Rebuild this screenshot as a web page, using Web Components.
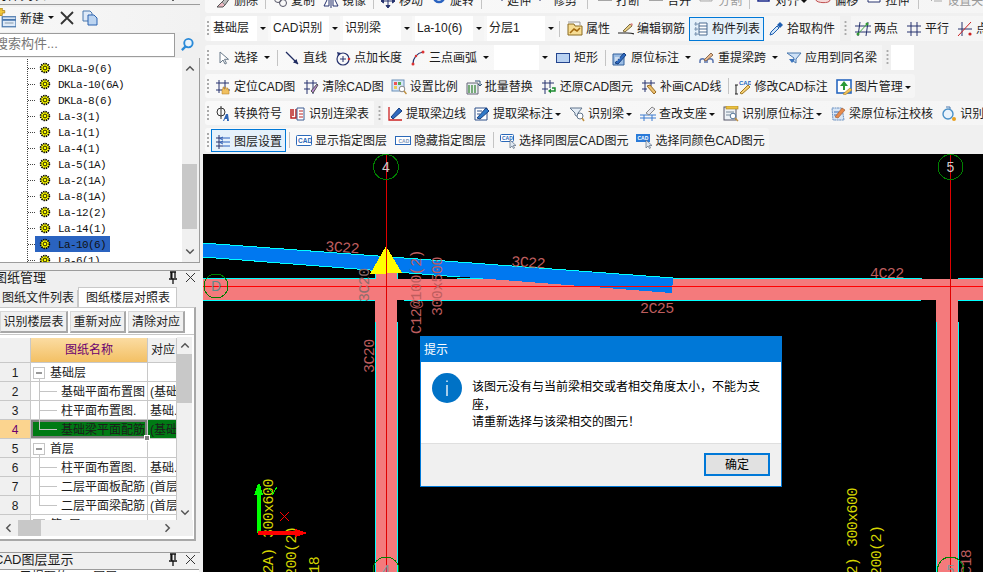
<!DOCTYPE html>
<html lang="zh">
<head>
<meta charset="utf-8">
<title>构件</title>
<style>
  html, body { margin: 0; height: 100%; overflow: hidden; background: #f0f0f0; }
  body { font: 12px "Liberation Sans", "Noto Sans CJK SC", sans-serif; color: #1c1c1c; }
</style>
</head>
<body>
<app-shell>
  <side-panel slot="side"></side-panel>

  <tool-bar slot="main" style="height:24px;margin-top:-11px">
    <tool-btn icon="erase">删除</tool-btn><tool-sep></tool-sep>
    <tool-btn icon="chain">复制</tool-btn>
    <tool-btn icon="mirror">镜像</tool-btn><tool-sep></tool-sep>
    <tool-btn icon="move">移动</tool-btn>
    <tool-btn icon="rotate">旋转</tool-btn><tool-sep></tool-sep>
    <tool-btn icon="extend">延伸</tool-btn>
    <tool-btn icon="trim" style="margin-left:-5px">修剪</tool-btn><tool-sep style="width:12px"></tool-sep>
    <tool-btn icon="break">打断</tool-btn>
    <tool-btn icon="merge">合并</tool-btn>
    <tool-btn icon="split" disabled>分割</tool-btn><tool-sep></tool-sep>
    <tool-btn icon="align" arrow="tight">对齐</tool-btn>
    <tool-btn icon="offset">偏移</tool-btn>
    <tool-btn icon="stretch">拉伸</tool-btn><tool-sep style="width:11px"></tool-sep>
    <tool-btn icon="grip" disabled>设置夹点</tool-btn>
  </tool-bar>

  <tool-bar slot="main" grip style="height:25px;margin-top:3px">
    <tool-combo w="57">基础层</tool-combo>
    <tool-combo w="69">CAD识别</tool-combo>
    <tool-combo w="69">识别梁</tool-combo>
    <tool-combo w="69">La-10(6)</tool-combo>
    <tool-combo w="69">分层1</tool-combo>
    <tool-sep style="margin-left:-3px;width:7px"></tool-sep>
    <tool-btn icon="prop">属性</tool-btn>
    <tool-btn icon="editbar">编辑钢筋</tool-btn>
    <tool-btn icon="list" active>构件列表</tool-btn>
    <tool-btn icon="dropper">拾取构件</tool-btn>
    <tool-gap style="width:11px"></tool-gap>
    <tool-btn icon="twopoint">两点</tool-btn>
    <tool-btn icon="parallel">平行</tool-btn>
    <tool-btn icon="pointang">点</tool-btn>
  </tool-bar>

  <tool-bar slot="main" grip style="height:25px;margin-top:4px">
    <tool-btn icon="cursor" arrow>选择</tool-btn><tool-sep></tool-sep>
    <tool-btn icon="line">直线</tool-btn>
    <tool-btn icon="pointlen">点加长度</tool-btn>
    <tool-btn icon="arc" arrow>三点画弧</tool-btn>
    <tool-combo w="56" blank style="margin:0 1px"></tool-combo>
    <tool-btn icon="rect">矩形</tool-btn><tool-sep></tool-sep>
    <tool-btn icon="inplace" arrow>原位标注</tool-btn>
    <tool-btn icon="respan" arrow>重提梁跨</tool-btn>
    <tool-btn icon="funnel">应用到同名梁</tool-btn>
    <tool-gap></tool-gap>
    <tool-combo w="23" blank bare style="margin:0"></tool-combo>
  </tool-bar>

  <tool-bar slot="main" grip style="height:24px;margin-top:4px;--ty:2px">
    <tool-btn icon="locate">定位CAD图</tool-btn>
    <tool-btn icon="clear">清除CAD图</tool-btn>
    <tool-btn icon="scale" style="margin-left:-1px">设置比例</tool-btn>
    <tool-btn icon="batch">批量替换</tool-btn>
    <tool-btn icon="restore">还原CAD图元</tool-btn>
    <tool-btn icon="patch">补画CAD线</tool-btn><tool-sep></tool-sep>
    <tool-btn icon="cadmark">修改CAD标注</tool-btn>
    <tool-btn icon="picture" arrow="tight">图片管理</tool-btn>
  </tool-bar>

  <tool-bar slot="main" grip style="height:24px;margin-top:3px;--ty:2px">
    <tool-btn icon="symbol">转换符号</tool-btn>
    <tool-btn icon="linktable">识别连梁表</tool-btn>
    <tool-gap></tool-gap>
    <tool-btn icon="edge">提取梁边线</tool-btn>
    <tool-btn icon="beamtag" arrow="tight">提取梁标注</tool-btn>
    <tool-btn icon="findbeam" arrow="tight">识别梁</tool-btn>
    <tool-btn icon="support" arrow="tight">查改支座</tool-btn>
    <tool-btn icon="findtag" arrow="tight">识别原位标注</tool-btn>
    <tool-btn icon="checktag">梁原位标注校核</tool-btn>
    <tool-btn icon="findhole">识别</tool-btn>
  </tool-bar>

  <tool-bar slot="main" grip style="height:24px;margin-top:3px;--ty:2px">
    <tool-btn icon="layers" active>图层设置</tool-btn><tool-sep></tool-sep>
    <tool-btn icon="cadshow">显示指定图层</tool-btn>
    <tool-btn icon="cadhide">隐藏指定图层</tool-btn><tool-sep></tool-sep>
    <tool-btn icon="cadsel">选择同图层CAD图元</tool-btn>
    <tool-btn icon="cadcolor">选择同颜色CAD图元</tool-btn>
  </tool-bar>

  <cad-canvas slot="main" style="margin-top:2px">
    <msg-dialog heading="提示">该图元没有与当前梁相交或者相交角度太小，不能为支座，<br>请重新选择与该梁相交的图元！</msg-dialog>
  </cad-canvas>
</app-shell>

<script>
const NAVY = '#27336e'
const ICONS = {
  erase: `<path d="M2 14l5-5 3 3-2 2z" fill="#e9b7c0" stroke="#555"/><path d="M7 9l6-6 2 2-5 7" fill="#bbb" stroke="#555"/>`,
  chain: `<circle cx="6" cy="6" r="3.5" fill="none" stroke="#556"/><circle cx="11" cy="10" r="3.5" fill="none" stroke="#556"/>`,
  mirror: `<path d="M1 13L6 3v10zM15 13L10 3v10z" fill="#fff" stroke="${NAVY}"/><path d="M8 1v14" stroke="${NAVY}"/>`,
  move: `<path d="M8 1v14M1 8h14M8 1L6 3.5h4zM8 15l-2-2.5h4zM1 8l2.5-2v4zM15 8l-2.5-2v4z" stroke="${NAVY}" fill="${NAVY}"/>`,
  rotate: `<circle cx="8" cy="4" r="5" fill="#fff" stroke="#2a63c0" stroke-width="2.6"/>`,
  extend: `<path d="M1 2v3h9M14 0v8" stroke="${NAVY}" fill="none"/><path d="M11 5h2" stroke="#c22"/>`,
  trim: `<path d="M6 0v8M1 3h13" stroke="${NAVY}" fill="none"/>`,
  break: `<path d="M1 1h14v6H1zM1 4h14" fill="#fff" stroke="#555"/>`,
  merge: `<path d="M1 1h14v6H1zM1 4h6M9 4h6" fill="#fff" stroke="#555"/>`,
  split: `<path d="M1 1h12v7H1zM3 3l8 4" fill="#eee" stroke="#aaa"/>`,
  align: `<path d="M2 0h11v8H2z" fill="#fff" stroke="#1b2a8a" stroke-width="1.5"/><path d="M4 4h7" stroke="#c22" stroke-width="2"/>`,
  offset: `<path d="M1 7c0-4 3-6 7-6s7 2 7 6-14 3-14 0z" fill="#f5d9d9" stroke="#c05050"/>`,
  stretch: `<path d="M2 0h8l4 4v5H2z" fill="#fff" stroke="${NAVY}"/><path d="M8 3v4" stroke="${NAVY}" stroke-dasharray="1 1"/>`,
  grip: `<path d="M3 8l7-7M6 8h8" stroke="#aaa" fill="none"/>`,
  prop: `<path d="M1 3h6l1 2h7v9H1z" fill="#f7dd94" stroke="#8a6a20"/><path d="M1 1h12v3" fill="none" stroke="#999"/><path d="M3 12l4-4 3 2 3-3" fill="none" stroke="#a36a10" stroke-width="1.6"/>`,
  editbar: `<path d="M0 12h9c2 0 5 0 7 1" stroke="#222" fill="none" stroke-width="1.2"/><path d="M5 10l7-7 2 2-7 6z" fill="#e9cf85" stroke="#7a6a40"/><path d="M12 3l2-1 1 2-1 1z" fill="#d88"/>`,
  list: `<path d="M6 2h8v12H6zM6 5h8M6 8h8M6 11h8" fill="#fff" stroke="#4a6a90"/><path d="M2 2h2v2H2zM2 7h2v2H2zM2 12h2v2H2z" fill="none" stroke="#4a6a90" stroke-dasharray="1 .6"/>`,
  dropper: `<path d="M2 14l1-3 6-6 2 2-6 6z" fill="#cfe5fa" stroke="#1f5fb0"/><path d="M9 4l3-3 3 3-3 3z" fill="#1f5fb0"/>`,
  twopoint: `<path d="M5 1L3 15M13 1l-2 14M0 5h16M0 11h16" stroke="${NAVY}" fill="none"/><path d="M13 2L2 14" stroke="#4a4"/><circle cx="12" cy="3" r="1.5" fill="#393"/><circle cx="3" cy="13" r="1.5" fill="#393"/>`,
  parallel: `<path d="M5 1v14M11 1v14M1 5h14M1 11h14" stroke="${NAVY}" fill="none"/>`,
  pointang: `<path d="M5 1v14M1 8h14" stroke="${NAVY}" fill="none"/><path d="M14 1L1 15" stroke="#c22"/><circle cx="13" cy="13" r="1.6" fill="#c22"/>`,
  cursor: `<path d="M5 2v11l3-3 2 4 1.500-.7-2-4h4z" fill="#fff" stroke="#6a7a8a"/>`,
  line: `<path d="M2 2l12 12" stroke="#1e2a60" stroke-width="1.300"/><path d="M14 14l-5-1.500 3.500-3.500z" fill="#1e2a60"/>`,
  pointlen: `<circle cx="8" cy="9" r="6" fill="none" stroke="#27336e" stroke-width="1.200"/><path d="M8 6v6M5 9h6" stroke="#27336e"/><path d="M2 2l4 1-3 3z" fill="#27336e"/><circle cx="14" cy="9" r="1.300" fill="#c33"/>`,
  arc: `<path d="M3 14C3 8 7 3 13 2" fill="none" stroke="#27336e" stroke-width="1.200"/><circle cx="3" cy="14" r="1.500" fill="#d33"/><circle cx="6" cy="6" r="1.200" fill="#d33"/><circle cx="13" cy="2" r="1.500" fill="#d33"/>`,
  rect: `<rect x="1.500" y="3.500" width="13" height="9" fill="#b9d2f2" stroke="#24458f"/>`,
  inplace: `<path d="M1 4h11v11H1z" fill="#9cbde4" stroke="#33619c"/><path d="M3 13l9-10 2 2-8 9z" fill="#2f6ac0" stroke="#173f80"/><path d="M3 8h5M3 10h3" stroke="#fff"/>`,
  respan: `<path d="M1 13v-2c0-3 5-3 5 0v2M8 13v-2c0-3 6-3 6 0v2" fill="none" stroke="#5a76b0" stroke-width="1.500"/><path d="M5 10l7-7 2 2-7 6z" fill="#e9b98c" stroke="#8a6a50"/>`,
  funnel: `<path d="M1 3h14l-5 6v4l-3-2 1-3z" fill="#cfe2f7" stroke="#4a78ae"/><path d="M3 9l3 4 3-4z" fill="#3b74bd"/>`,
  locate: `<path d="M4 1v13M10 1v13M1 4h13" stroke="${NAVY}" fill="none"/><path d="M1 11h14" stroke="${NAVY}"/><path d="M7 15v-5h1v-2h1v2h1V8h1v2h1V9h1v2h1v4z" fill="#f0c060" stroke="#b07a20" stroke-width=".5"/>`,
  clear: `<path d="M4 1v14M10 1v14M1 4h13M1 10h6" stroke="${NAVY}" fill="none"/><path d="M8 12l6-7 1 1-5 8z" fill="#b98ad0" stroke="#555"/>`,
  scale: `<rect x="1" y="1" width="12" height="11" fill="#d6e6f7" stroke="#6a90b8"/><rect x="3" y="3" width="3" height="3" fill="#e55"/><rect x="7" y="3" width="3" height="3" fill="#5a5"/><rect x="3" y="7" width="3" height="3" fill="#ec5"/><circle cx="11" cy="10" r="2.800" fill="#fff" stroke="#888"/><path d="M13 12l2.500 3" stroke="#c09040" stroke-width="1.500"/>`,
  batch: `<path d="M1 4h11v11H1z" fill="#e9eef2" stroke="#667"/><path d="M3 6v8M6 6v8M9 6v8" stroke="#5a9a5a" stroke-width="1.600"/><path d="M9 2h5v4M12 5l2 2 2-2" fill="none" stroke="#357"/>`,
  restore: `<path d="M4 1v14M9 1v8M1 4h12M1 10h6" stroke="${NAVY}" fill="none"/><path d="M8 12h6v-3h-3" fill="none" stroke="#1d8a30" stroke-width="1.500"/><path d="M7 12l3-2.500v5z" fill="#1d8a30"/>`,
  patch: `<path d="M4 1v12M10 1v6M1 4h13M1 10h5" stroke="${NAVY}" fill="none"/><path d="M6 7l3-1 6 7-2 2z" fill="#eac070" stroke="#9a6a20"/>`,
  cadmark: `<path d="M1 6v9M0 6h3M0 15h3" stroke="#222" fill="none"/><path d="M5 14l8-8 2 2-8 7z" fill="#f3cf75" stroke="#a47a20"/><text x="4" y="5.500" font-size="6" font-weight="700" fill="#1b66c0" font-family="Liberation Sans">CAD</text>`,
  picture: `<rect x="1" y="1" width="14" height="13" fill="#fff" stroke="#2a68c0" stroke-width="1.600"/><path d="M8 2l4 5h-3v4H7V7H4z" fill="#2d9a36"/><path d="M7 15l7-6 2 2-7 5z" fill="#f2c45a" stroke="#aa7a20" stroke-width=".6"/>`,
  symbol: `<circle cx="6" cy="6" r="4" fill="none" stroke="#333"/><path d="M6 0v13" stroke="#333"/><path d="M8 15l3-7h2l1 7h-2v-2h-2l-1 2z" fill="#2f65b5"/>`,
  linktable: `<path d="M1 3v9h5V3M3 3v7" fill="none" stroke="#bb2222" stroke-width="1.500"/><path d="M7 2h7v12H7z" fill="#fff" stroke="#3c5a90"/><path d="M9 5h4M9 8h4M9 11h4" stroke="#bb2222"/>`,
  edge: `<path d="M2 1v13h13" fill="none" stroke="#c22" stroke-width="1.300"/><path d="M4 11l8-9 3 3-9 8z" fill="#2f6ac0" stroke="#173f80"/>`,
  beamtag: `<path d="M1 2h12v12H1z" fill="#fff" stroke="#2c4f88"/><path d="M3 12l9-10 3 3-9 8z" fill="#2f7ac8" stroke="#173f80"/><path d="M3 5h5M3 8h3" stroke="#2c4f88"/>`,
  findbeam: `<path d="M1 2h12l-4 5v4l-3-2V7z" fill="#e4edf6" stroke="#60748c"/><circle cx="11" cy="10" r="3" fill="#fff" stroke="#60748c"/><path d="M13 12l2 3" stroke="#c09040" stroke-width="1.500"/>`,
  support: `<path d="M0 9h16M4 9v6M12 9v6" stroke="#3a7ad0" fill="none"/><path d="M0 12h16" stroke="#3a7ad0"/><path d="M6 7l6-6 3 2-6 6z" fill="#e8e8ee" stroke="#888"/>`,
  findtag: `<rect x="1" y="1" width="12" height="13" fill="#eef2f6" stroke="#556"/><rect x="3" y="0" width="12" height="3" fill="#eac040" stroke="#a88020" stroke-width=".6"/><path d="M3 6h8M3 9h4" stroke="#789"/><circle cx="10" cy="10" r="2.800" fill="#fff" stroke="#579"/><path d="M12 12l3 3" stroke="#c09040" stroke-width="1.500"/>`,
  checktag: `<path d="M2 2h10l2 12H3z" fill="#d8e6f6" stroke="#6a90c0" stroke-dasharray="2 .5"/><path d="M4 6h5M4 9h4" stroke="#3a6ab0"/><path d="M5 11l7-9 3 2-7 8z" fill="#e88a4a" stroke="#a0603a" stroke-width=".7"/>`,
  findhole: `<path d="M5 1h4v2" fill="none" stroke="#4a78ae"/><circle cx="7" cy="8" r="5" fill="#eaf3fb" stroke="#4a90c8" stroke-width="1.400"/><circle cx="13" cy="13" r="2" fill="#e8a020"/>`,
  layers: `<path d="M4 1v14M1 4h7M1 8h7M1 12h7" stroke="${NAVY}" fill="none"/><path d="M8 3l-3 1.500L8 6M8 7L5 8.500 8 10" fill="none" stroke="#2a63c0"/><path d="M8 4h7M8 8h7M8 12h7" stroke="#2a63c0"/>`,
  cadshow: `<rect x=".500" y="2.500" width="15" height="10" rx="1" fill="#fff" stroke="#2a68b8"/><text x="2" y="10" font-size="6.500" font-weight="700" fill="#2a68b8" font-family="Liberation Sans">CAD</text>`,
  cadhide: `<rect x=".500" y="3.500" width="15" height="8" fill="#fff" stroke="#2a68b8"/><text x="3.500" y="9.500" font-size="5" font-weight="700" fill="#7a94b8" font-family="Liberation Sans">CAD</text>`,
  cadsel: `<rect x=".500" y="1.500" width="13" height="7" rx="1" fill="#fff" stroke="#2a68b8"/><text x="2" y="7" font-size="5" font-weight="700" fill="#2a68b8" font-family="Liberation Sans">CAD</text><path d="M10 7v8l2-2 1.500 2.500 1-.5-1.200-2.500H16z" fill="#dfe8f2" stroke="#5a6a80" stroke-width=".7"/>`,
  cadcolor: `<rect x="0" y="1" width="14" height="8" fill="#2a7ad8"/><text x="1.500" y="7" font-size="5" font-weight="700" fill="#fff" font-family="Liberation Sans">CAD</text><path d="M10 7v8l2-2 1.500 2.500 1-.5-1.200-2.500H16z" fill="#dfe8f2" stroke="#5a6a80" stroke-width=".7"/>`,
  add: `<rect x="5" y="7" width="11" height="8" fill="#dfeaf8" stroke="#4a78ae"/><path d="M5 9.500h11" stroke="#4a78ae" stroke-width="1.500"/><path d="M7 12h7" stroke="#9ab"/><path d="M3 0h2v2h2v2H5v2H3V4H1V2h2z" fill="#f3c83a" stroke="#a87a10" stroke-width=".6"/>`,
  cross: `<path d="M2 2l12 12M14 2L2 14" stroke="#333" stroke-width="1.800"/>`,
  docs: `<path d="M1 1h7l2 2v8H1z" fill="#dfeaf8" stroke="#4a78ae"/><path d="M6 5h6l3 3v7H6z" fill="#bcd4f0" stroke="#2a63b0"/>`,
  search: `<circle cx="9" cy="6.500" r="4.500" fill="#eaf4fc" stroke="#2a8ad8" stroke-width="2"/><path d="M6 10l-4 4" stroke="#2a8ad8" stroke-width="2.500"/>`,
  gear: `<circle cx="8" cy="8" r="5" fill="#ff0" stroke="#000" stroke-width="2" stroke-dasharray="1.600 1"/><circle cx="8" cy="8" r="2.200" fill="none" stroke="#000"/>`,
  pin: `<path d="M5 2h6M6 2v6M10 2v6M4 9h8M8 9v5" stroke="#111" fill="none" stroke-width="1.300"/><rect x="6" y="2" width="1.500" height="7" fill="#111"/>`,
  close: `<path d="M3 3l9 9M12 3l-9 9" stroke="#333" fill="none"/>`,
  up: `<path d="M3 10l5-5 5 5" fill="none" stroke="#555" stroke-width="2"/>`,
  down: `<path d="M3 6l5 5 5-5" fill="none" stroke="#555" stroke-width="2"/>`,
  left: `<path d="M10 3L5 8l5 5" fill="none" stroke="#555" stroke-width="2"/>`,
  right: `<path d="M6 3l5 5-5 5" fill="none" stroke="#555" stroke-width="2"/>`,
}

function icon(name, size = 16) {
  return `<svg width="${size}" height="${size}" viewBox="0 0 16 16" style="display:block;flex:none">${ICONS[name] || ''}</svg>`
}

const FONT = `"Liberation Sans", "Noto Sans CJK SC", sans-serif`

class AppShell extends HTMLElement {
  constructor() {
    super()
    this.shadow = this.attachShadow({ mode: 'open' })
  }

  connectedCallback() {
    this.shadow.innerHTML = `
      <style>
        :host { display: flex; width: 983px; height: 572px; overflow: hidden; font-family: ${FONT}; font-size: 12px; }
        .side { width: 200px; flex: none; margin-right: 3px; }
        .main { width: 780px; flex: none; display: flex; flex-direction: column; }
      </style>
      <div class="side"><slot name="side"></slot></div>
      <div class="main"><slot name="main"></slot></div>
    `
  }
}

class ToolBar extends HTMLElement {
  constructor() {
    super()
    this.shadow = this.attachShadow({ mode: 'open' })
  }

  connectedCallback() {
    const grip = this.hasAttribute('grip') ? '<span class="grip"></span>' : '<span class="nogrip"></span>'
    this.shadow.innerHTML = `
      <style>
        :host {
          display: flex; align-items: stretch; flex: none; box-sizing: border-box; border-radius: 3px;
          margin-left: 2px; width: max-content; white-space: nowrap;
          background: linear-gradient(90deg, #f9f9f9, #f5f5f5);
        }
        .grip { width: 6px; flex: none; background: radial-gradient(circle at 3px 2px, #aaa 1px, transparent 1.2px) 0 4px / 6px 4px repeat-y; background-clip: content-box; padding: 4px 0; }
        .nogrip { width: 6px; flex: none; }
      </style>
      ${grip}
      <slot></slot>
    `
  }
}

class ToolBtn extends HTMLElement {
  constructor() {
    super()
    this.shadow = this.attachShadow({ mode: 'open' })
  }

  connectedCallback() {
    const arrow = this.getAttribute('arrow')
    const am = arrow === 'tight' ? -1 : 3
    this.shadow.innerHTML = `
      <style>
        :host {
          display: inline-flex; align-items: center; gap: 3px; padding: var(--ty, 0px) 4px 0; box-sizing: border-box;
          flex: none; line-height: 16px; color: #1c1c1c;
        }
        :host([active]) { background: #e5f1fb; box-shadow: inset 0 0 0 1px #0078d7; margin-top: 1px; }
        :host([disabled]) { color: #9a9a9a; }
        .arrow { width: 0; height: 0; border: 3px solid transparent; border-top: 3px solid #111; border-bottom: 0; margin-left: ${am}px; }
      </style>
      ${icon(this.getAttribute('icon'))}
      <slot></slot>
      ${arrow !== null ? '<span class="arrow"></span>' : ''}
    `
  }
}

class ToolCombo extends HTMLElement {
  constructor() {
    super()
    this.shadow = this.attachShadow({ mode: 'open' })
  }

  connectedCallback() {
    const w = this.getAttribute('w')
    const bare = this.hasAttribute('bare')
    this.shadow.innerHTML = `
      <style>
        :host { display: flex; flex: none; width: ${w}px; margin-right: 3px; box-sizing: border-box; }
        .val { flex: 1; background: #fff; padding-left: 2px; line-height: 25px; overflow: hidden; white-space: nowrap; }
        .btn { width: 11px; flex: none; background: #f5f5f5; display: flex; align-items: center; justify-content: center; }
        .btn i { width: 0; height: 0; border: 3px solid transparent; border-top: 3px solid #111; border-bottom: 0; }
      </style>
      <div class="val"><slot></slot></div>
      ${bare ? '' : '<div class="btn"><i></i></div>'}
    `
  }
}

class ToolSep extends HTMLElement {
  constructor() {
    super()
    this.shadow = this.attachShadow({ mode: 'open' })
  }

  connectedCallback() {
    this.shadow.innerHTML = `
      <style>
        :host { display: flex; justify-content: center; align-items: center; width: 6px; flex: none; }
        i { width: 1px; height: 16px; background: #c4c4c4; }
      </style>
      <i></i>
    `
  }
}

// gap between two toolbars on the same row, ends one band and starts the next
class ToolGap extends HTMLElement {
  constructor() {
    super()
    this.shadow = this.attachShadow({ mode: 'open' })
  }

  connectedCallback() {
    this.shadow.innerHTML = `
      <style>
        :host { display: flex; width: 9px; flex: none; background: #f0f0f0; margin-left: 1px; }
        i { margin: 4px 0 4px 4px; width: 3px; background: radial-gradient(circle, #aaa 1px, transparent 1.2px) 0 0 / 3px 4px repeat-y; }
      </style>
      <i></i>
    `
  }
}

class DockTitle extends HTMLElement {
  constructor() {
    super()
    this.shadow = this.attachShadow({ mode: 'open' })
  }

  connectedCallback() {
    this.shadow.innerHTML = `
      <style>
        :host {
          display: flex; align-items: center; height: 13px; padding-bottom: 3px; flex: none; box-sizing: content-box;
          border-top: 1px solid #9c9c9c; font-size: 13px; overflow: hidden; white-space: nowrap;
        }
        .t { flex: 1; margin-left: -6px; line-height: 13px; }
        .b { display: flex; gap: 2px; padding-right: 1px; }
      </style>
      <span class="t"><slot></slot></span>
      <span class="b">${icon('pin')}${icon('close')}</span>
    `
  }
}

class MemberTree extends HTMLElement {
  constructor() {
    super()
    this.shadow = this.attachShadow({ mode: 'open' })
  }

  connectedCallback() {
    const names = ['DKLa-9(6)', 'DKLa-10(6A)', 'DKLa-8(6)', 'La-3(1)', 'La-1(1)', 'La-4(1)', 'La-5(1A)', 'La-2(1A)', 'La-8(1A)', 'La-12(2)', 'La-14(1)', 'La-10(6)', 'La-6(1)']
    const rows = names.map(n => `
      <div class="row">
        <span class="dash"></span>
        <span class="item ${n === 'La-10(6)' ? 'sel' : ''}">${icon('gear', 14)}<span class="lb">${n}</span></span>
      </div>`).join('')
    this.shadow.innerHTML = `
      <style>
        :host { display: flex; height: 205px; flex: none; box-sizing: border-box; border-bottom: 1px solid #9c9c9c; border-right: 1px solid #9c9c9c; background: #f0f0f0; }
        .tree { width: 182px; flex: none; background: #fff; overflow: hidden; padding: 1px 0 0 0; }
        .inner { margin-left: 27px; border-left: 1px dotted #444; padding-top: 1px; }
        .row { display: flex; align-items: center; height: 16px; }
        .dash { width: 7px; border-top: 1px dotted #444; flex: none; }
        .item { display: flex; align-items: center; height: 16px; padding: 0 4px 0 3px; }
        .sel { background: #2a63c0; }
        .lb { font: 11px/16px "Liberation Mono", monospace; letter-spacing: -.6px; margin: 1px 0 0 6px; color: #111; }
        .bar { width: 15px; flex: none; display: flex; flex-direction: column; align-items: center; }
        .ch { height: 22px; display: flex; align-items: center; }
        .sp { flex: none; height: 84px; }
        .thumb { height: 65px; width: 15px; background: #c8c8c8; flex: none; }
        .end { margin-top: auto; }
      </style>
      <div class="tree"><div class="inner">${rows}</div></div>
      <div class="bar">
        <div class="ch">${icon('up', 12)}</div>
        <div class="sp"></div>
        <div class="thumb"></div>
        <div class="ch end">${icon('down', 12)}</div>
      </div>
    `
  }
}

class DrawingGrid extends HTMLElement {
  constructor() {
    super()
    this.shadow = this.attachShadow({ mode: 'open' })
  }

  link(kind) {
    const line = '#c4c4c4'
    if (kind === 'root') {
      return `<svg width="19" height="19" style="flex:none"><rect x="2.500" y="4.500" width="11" height="11" fill="#fff" stroke="${line}"/><path d="M5 10h6" stroke="#333"/><path d="M8.500 16v3" stroke="${line}"/></svg>`
    }
    const v = kind === 'last' ? 'M8.500 0v10' : 'M8.500 0v19'
    return `<svg width="30" height="19" style="flex:none"><path d="${v}M8 9.500h18" stroke="${line}" fill="none"/></svg>`
  }

  connectedCallback() {
    const rows = [
      ['1', 'root', '基础层', ''],
      ['2', 'mid', '基础平面布置图', '(基础'],
      ['3', 'mid', '柱平面布置图.', '基础.'],
      ['4', 'last', '基础梁平面配筋', '(基础'],
      ['5', 'root', '首层', ''],
      ['6', 'mid', '柱平面布置图.', '基础.'],
      ['7', 'mid', '二层平面板配筋', '(首层'],
      ['8', 'last', '二层平面梁配筋', '(首层'],
      ['', 'root', '第2层', ''],
    ]
    const cells = rows.map((r, i) => {
      const sel = i === 3
      return `
        <div class="c no ${sel ? 'selno' : ''}"><b>${r[0]}</b></div>
        <div class="c name ${sel ? 'sel' : ''}">${this.link(r[1])}<b>${r[2]}</b>${sel ? '<i class="handle"></i>' : ''}</div>
        <div class="c val ${sel ? 'selval' : ''}"><b>${r[3]}</b></div>`
    }).join('')
    this.shadow.innerHTML = `
      <style>
        :host { display: block; height: 204px; box-sizing: border-box; background: #fff; }
        .top { display: flex; height: 185px; }
        .grid {
          width: 177px; flex: none; height: 182px; margin-top: 3px; overflow: hidden;
          display: grid; grid-template-columns: 31px 117px 29px; grid-auto-rows: 19px;
          grid-template-rows: 25px; line-height: 18px; white-space: nowrap;
        }
        .c { box-sizing: border-box; border-right: 1px solid #c8c8c8; border-bottom: 1px solid #c8c8c8; overflow: hidden; display: flex; align-items: center; position: relative; }
        .c b { font-weight: 400; padding-top: 2px; }
        .no { background: #f0f0f0; justify-content: center; }
        .hname { background: linear-gradient(#fbdca2, #f3c064); color: #6a0070; justify-content: center; }
        .selno { background: #fbd48f; color: #6a0070; }
        .sel { background: #007a14; box-shadow: inset 0 0 0 2px #808080; overflow: visible; z-index: 1; }
        .selval { background: #007a14; }
        .val { padding-left: 2px; }
        .handle { position: absolute; right: -3px; bottom: -3px; width: 4px; height: 4px; background: #808080; border: 1px solid #fff; }
        .vs { width: 15px; flex: none; margin: 2px 0 0 0; background: #f0f0f0; display: flex; flex-direction: column; align-items: center; }
        .vs .th { width: 15px; height: 49px; background: #c8c8c8; }
        .vs .a { height: 17px; display: flex; align-items: center; }
        .vs .e { margin-top: auto; }
        .hs { display: flex; align-items: center; width: 193px; height: 16px; background: #f0f0f0; box-sizing: border-box; }
        .hs .l { width: 18px; display: flex; justify-content: center; }
        .hs .th { width: 23px; height: 16px; background: #c8c8c8; }
        .hs .r { margin-left: auto; width: 50px; display: flex; padding-left: 18px; box-sizing: border-box; }
      </style>
      <div class="top">
        <div class="grid">
          <div class="c no"></div>
          <div class="c hname">图纸名称</div>
          <div class="c no" style="justify-content:flex-start;padding-left:3px">对应</div>
          ${cells}
        </div>
        <div class="vs">
          <div class="a">${icon('up', 12)}</div>
          <div class="th"></div>
          <div class="a e">${icon('down', 12)}</div>
        </div>
      </div>
      <div class="hs">
        <div class="l">${icon('left', 12)}</div>
        <div class="th"></div>
        <div class="r">${icon('right', 12)}</div>
      </div>
    `
  }
}

class SidePanel extends HTMLElement {
  constructor() {
    super()
    this.shadow = this.attachShadow({ mode: 'open' })
  }

  connectedCallback() {
    this.shadow.innerHTML = `
      <style>
        :host { display: flex; flex-direction: column; height: 572px; font-size: 12px; overflow: hidden; }
        .clip { height: 4px; flex: none; overflow: hidden; border-bottom: 1px solid #9c9c9c; }
        .clip dock-title { margin-top: -12px; border-top: 0; }
        .acts { display: flex; align-items: center; height: 25px; box-sizing: border-box; padding-bottom: 4px; margin-top: 2px; flex: none; background: linear-gradient(90deg,#f7f7f7,#f2f2f2); }
        .acts .new { margin-left: -4px; }
        .acts .txt { margin-left: 4px; }
        .acts .arr { border: 3px solid transparent; border-top: 3px solid #111; border-bottom: 0; margin: 0 5px 0 4px; }
        .acts .docs { margin-left: 7px; }
        .find { display: flex; height: 25px; flex: none; margin-top: 1px; }
        .find .in {
          width: 175px; height: 24px; box-sizing: border-box; background: #fff; border: 1px solid #9c9c9c; border-left: 0;
          font-size: 13px; line-height: 20px; color: #777; overflow: hidden; white-space: nowrap;
        }
        .find .in span { margin-left: -5px; display: inline-block; }
        .find .bt { flex: 1; display: flex; align-items: center; justify-content: center; padding-bottom: 3px; }
        .gap7 { height: 7px; flex: none; }
        .gap11 { height: 11px; flex: none; }
        .tabs { display: flex; align-items: flex-end; height: 20px; flex: none; }
        .tab { box-sizing: border-box; height: 17px; line-height: 17px; padding: 0 3px 0 2px; width: 78px; white-space: nowrap; overflow: hidden; background: #f0f0f0; border-right: 1px solid #c8c8c8; }
        .tab.on { width: 99px; height: 20px; line-height: 20px; background: #fff; padding-left: 7px; border: 1px solid #c8c8c8; border-bottom: 0; }
        .body { flex: none; height: 234px; width: 196px; box-sizing: border-box; background: #fff; border-right: 2px solid #a8a8a8; border-bottom: 2px solid #a8a8a8; border-top: 1px solid #c8c8c8; }
        .btns { display: flex; gap: 2px; height: 27px; box-sizing: border-box; padding-top: 3px; border-bottom: 1px solid #c8c8c8; background: #fff; }
        .btns span { box-sizing: border-box; height: 22px; line-height: 20px; background: #f0f0f0; border: 1px solid #d8d8d8; border-right: 2px solid #a8a8a8; border-bottom: 2px solid #a8a8a8; text-align: center; white-space: nowrap; color: #222; }
        .rest { flex: 1; background: #fff; border-top: 1px solid #9c9c9c; overflow: hidden; padding-left: 20px; line-height: 16px; margin-right: 1px; }
        .rest span { display: block; margin-top: -1px; }
      </style>
      <div class="clip"><dock-title>构件列表</dock-title></div>
      <div class="acts">
        <span class="new">${icon('add', 20)}</span>
        <span class="txt">新建</span>
        <span class="arr"></span>
        ${icon('cross')}
        <span class="docs">${icon('docs')}</span>
      </div>
      <div class="find">
        <div class="in"><span>搜索构件...</span></div>
        <div class="bt">${icon('search', 15)}</div>
      </div>
      <member-tree></member-tree>
      <div class="gap7"></div>
      <dock-title>图纸管理</dock-title>
      <div class="tabs">
        <div class="tab">图纸文件列表</div>
        <div class="tab on">图纸楼层对照表</div>
      </div>
      <div class="body">
        <div class="btns">
          <span style="width:68px">识别楼层表</span>
          <span style="width:56px">重新对应</span>
          <span style="width:57px">清除对应</span>
        </div>
        <drawing-grid></drawing-grid>
      </div>
      <div class="gap11"></div>
      <dock-title>CAD图层显示</dock-title>
      <div class="rest"><span>已提取的CAD图层</span></div>
    `
  }
}

class CadCanvas extends HTMLElement {
  constructor() {
    super()
    this.shadow = this.attachShadow({ mode: 'open' })
  }

  label(str, x, y, color, rot) {
    const tf = rot ? ` transform="rotate(${rot} ${x} ${y})"` : ''
    return `<text x="${x}" y="${y}" fill="${color}"${tf}>${str}</text>`
  }

  axis(x, y, r, str, color) {
    return `<circle cx="${x}" cy="${y}" r="${r}" fill="none" stroke="#008000" shape-rendering="crispEdges"/>
      <text class="ax" x="${x}" y="${y + 5}" fill="${color}">${str}</text>`
  }

  connectedCallback() {
    const pink = '#bd5d5e'
    const grey = '#8d6d6d'
    const yel = '#d6d600'
    const cyan = '#00ffff'
    this.shadow.innerHTML = `
      <style>
        :host { display: block; position: relative; flex: none; width: 780px; height: 418px; background: #000; overflow: hidden; }
        svg { display: block; }
        text { font: 15px "Liberation Mono", monospace; letter-spacing: -.6px; }
        .ax { font: 14px "Liberation Sans", sans-serif; letter-spacing: 0; text-anchor: middle; }
      </style>
      <svg width="780" height="418" viewBox="203 154 780 418">
        <g shape-rendering="crispEdges">
          <rect x="203" y="279" width="780" height="21" fill="#f47a7c"/>
          <rect x="375" y="273" width="22" height="299" fill="#f47a7c"/>
          <rect x="936" y="279" width="22" height="293" fill="#f47a7c"/>
          <path d="M203 278.500H375M203 300.500H375M404 300.500H921M457 278.500H922M958 278.500H983M958 300.500H983M375.500 322V572M397.500 322V572M936.500 322V572M958.500 322V572M370 270.500H375.500V279M397 272.500V279" stroke="${cyan}" fill="none"/>
          <polygon points="203,243 673,278 672,293 203,257" fill="#0078f0"/>
          <path d="M203 243L673 278M203 257L460 277" stroke="${cyan}" fill="none"/>
          <polygon points="386,246 402,273 370,274" fill="#ff0"/>
          <path d="M203 286.500H983" stroke="#f00" fill="none"/>
          <path d="M386.500 154V572M950.500 154V572" stroke="#e00000" fill="none"/>
        </g>
        ${this.axis(386, 167, 12.500, '4', '#c8c8c8')}
        ${this.axis(950.500, 167, 12.500, '5', '#c8c8c8')}
        ${this.axis(216, 286, 12, 'D', '#5f8a8a')}
        ${this.axis(386, 570, 13, '4', '#7d9a9a')}
        ${this.axis(950.500, 570, 13, '5', '#7d9a9a')}
        ${this.label('3C22', 325, 251, pink, 4)}
        ${this.label('3C22', 511, 266, pink, 4)}
        ${this.label('2C25', 640, 313, pink)}
        ${this.label('4C22', 870, 278, pink)}
        ${this.label('3C20', 369, 302, grey, -90)}
        ${this.label('3C20', 374, 373, pink, -90)}
        ${this.label('C12@100(2)', 421, 334, pink, -90)}
        ${this.label('300x500', 442, 316, pink, -90)}
        ${this.label('300x600', 273, 538, yel, -90)}
        ${this.label('(2A)', 273, 582, yel, -90)}
        ${this.label('200(2)', 296, 577, yel, -90)}
        ${this.label('C18', 319, 582, yel, -90)}
        ${this.label('300x600', 857, 547, yel, -90)}
        ${this.label('(2)', 857, 583, yel, -90)}
        ${this.label('200(2)', 881, 576, yel, -90)}
        ${this.label('C18', 971, 575, pink, -90)}
        <g shape-rendering="crispEdges">
          <rect x="257" y="492" width="4" height="41" fill="#0f0"/>
          <polygon points="258,484 260,484 263,495 254,495" fill="#0f0"/>
          <rect x="258" y="531" width="40" height="4" fill="#f00"/>
          <polygon points="295,529 307,533 295,537" fill="#f00"/>
          <path d="M272 495L277 487M268 488L272 492" stroke="#0f0" fill="none"/>
          <path d="M280 512L289 521M289 512L280 521" stroke="#f00" fill="none"/>
        </g>
      </svg>
      <slot></slot>
    `
  }
}

class MsgDialog extends HTMLElement {
  constructor() {
    super()
    this.shadow = this.attachShadow({ mode: 'open' })
  }

  connectedCallback() {
    this.shadow.innerHTML = `
      <style>
        :host {
          position: absolute; left: 217px; top: 182px; width: 362px; height: 151px; box-sizing: border-box;
          border: 1px solid #0078d7; background: #fff; display: flex; flex-direction: column; color: #000; font-size: 12px;
        }
        .head { height: 25px; background: #0078d7; color: #fff; line-height: 26px; padding-left: 3px; flex: none; }
        .body { flex: 1; display: flex; padding: 11px 12px 0 11px; gap: 10px; }
        .msg { width: 295px; line-height: 17.5px; padding-top: 6px; }
        .foot { height: 43px; flex: none; box-sizing: border-box; background: #f0f0f0; border-top: 1px solid #dfdfdf; display: flex; justify-content: flex-end; padding: 9px 11px 0 0; }
        .ok { width: 66px; height: 23px; box-sizing: border-box; border: 2px solid #0078d7; background: #e1e1e1; text-align: center; line-height: 20px; }
      </style>
      <div class="head">${this.getAttribute('heading')}</div>
      <div class="body">
        <svg width="30" height="30" viewBox="0 0 30 30" style="flex:none"><circle cx="15" cy="15" r="15" fill="#0072c6"/><path d="M15 7.500v1.500M15 12v11" stroke="#fff" stroke-width="1.300"/></svg>
        <div class="msg"><slot></slot></div>
      </div>
      <div class="foot"><div class="ok">确定</div></div>
    `
  }
}

customElements.define('app-shell', AppShell)
customElements.define('tool-bar', ToolBar)
customElements.define('tool-btn', ToolBtn)
customElements.define('tool-combo', ToolCombo)
customElements.define('tool-sep', ToolSep)
customElements.define('tool-gap', ToolGap)
customElements.define('dock-title', DockTitle)
customElements.define('member-tree', MemberTree)
customElements.define('drawing-grid', DrawingGrid)
customElements.define('side-panel', SidePanel)
customElements.define('cad-canvas', CadCanvas)
customElements.define('msg-dialog', MsgDialog)
</script>
</body>
</html>
